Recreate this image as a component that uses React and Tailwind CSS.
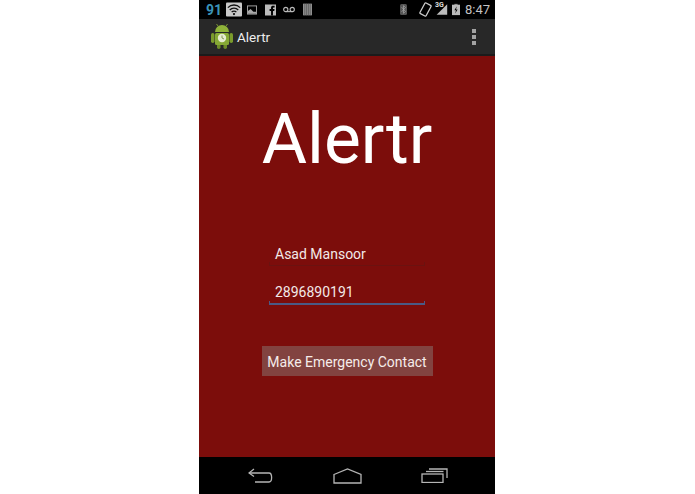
function StatusLeft() {
  return (
    <div className="flex items-center">
      <span className="text-[14px] leading-none font-bold text-[#3a93b8]">91</span>
      <svg width="16" height="15" viewBox="0 0 17 15" className="ml-[4px]">
        <rect width="17" height="15" rx="1" fill="#c9c9c9" />
        <path d="M2 5.500a9 9 0 0 1 13 0M4 8a6 6 0 0 1 9 0M6 10.300a3.400 3.400 0 0 1 5 0" stroke="#111" strokeWidth="1.400" fill="none" />
        <circle cx="8.500" cy="12.300" r="1.200" fill="#111" />
      </svg>
      <svg width="10" height="10" viewBox="0 0 11 10" className="ml-[5px]">
        <rect x="0.500" y="0.500" width="10" height="9" fill="none" stroke="#aaa" />
        <path d="M1 9V6l3-2 3 3 3 0v2z" fill="#aaa" />
      </svg>
      <svg width="11" height="12" viewBox="0 0 12 12" className="ml-[8px]">
        <rect width="12" height="12" fill="#bbb" />
        <path d="M6.600 12V7H5V5h1.600V3.600C6.600 2 7.500 1.400 8.900 1.400H10.500V3.300H9.500C8.900 3.300 8.700 3.600 8.700 4.100V5H10.400L10.100 7H8.700V12z" fill="#000" />
      </svg>
      <svg width="12" height="7" viewBox="0 0 13 7" className="ml-[7px]">
        <circle cx="3" cy="3.500" r="2.300" fill="none" stroke="#bbb" strokeWidth="1.200" />
        <circle cx="10" cy="3.500" r="2.300" fill="none" stroke="#bbb" strokeWidth="1.200" />
        <path d="M3 5.800h7" stroke="#bbb" strokeWidth="1.200" />
      </svg>
      <svg width="9" height="13" viewBox="0 0 10 13" className="ml-[8px]">
        <rect width="10" height="13" fill="#8f8f8f" />
        <path d="M2 0v13M4 0v13M6 0v13M8 0v13" stroke="#555" strokeWidth="0.800" />
      </svg>
    </div>
  )
}

function StatusRight() {
  return (
    <div className="flex items-center">
      <svg width="7" height="13" viewBox="0 0 9 14">
        <rect width="9" height="14" rx="2" fill="#555" />
        <path d="M2 4l5 5.500-2.500 2.500V2L7 4.500 2 10" stroke="#aaa" fill="none" strokeWidth="0.900" />
      </svg>
      <svg width="15" height="15" viewBox="0 0 15 15" className="ml-[11px]">
        <rect x="4" y="1.500" width="7" height="12" rx="1" transform="rotate(28 7.500 7.500)" fill="none" stroke="#ccc" strokeWidth="1.300" />
      </svg>
      <div className="relative ml-[2px] h-[15px] w-[13px]">
        <svg width="13" height="15" viewBox="0 0 16 15">
          <path d="M15 1v13H2z" fill="#bbb" />
        </svg>
        <span className="absolute top-[-1px] left-0 text-[7px] leading-[9px] font-bold text-[#ddd]">3G</span>
      </div>
      <svg width="8" height="13" viewBox="0 0 10 14" className="ml-[4px]">
        <rect y="1" width="10" height="13" fill="#bbb" />
        <rect x="3" width="4" height="1" fill="#bbb" />
        <path d="M6 3L3 8h2l-1 4 3-5H5z" fill="#000" />
      </svg>
      <span className="ml-[5px] text-[13px] leading-none text-[#c4c4c4]">8:47</span>
    </div>
  )
}

function AndroidLogo() {
  return (
    <svg width="22" height="25" viewBox="0 0 22 25">
      <rect x="0" y="9" width="3.500" height="10" rx="1.700" fill="#7a9a2c" />
      <rect x="18.500" y="9" width="3.500" height="10" rx="1.700" fill="#7a9a2c" />
      <rect x="6" y="19" width="3.500" height="6" rx="1.700" fill="#6d8c28" />
      <rect x="12.500" y="19" width="3.500" height="6" rx="1.700" fill="#6d8c28" />
      <path d="M4 8a7 7 0 0 1 14 0z" fill="#8fb339" />
      <path d="M7 2L5.500 0M15 2l1.500-2" stroke="#8fb339" strokeWidth="0.800" />
      <rect x="4" y="9" width="14" height="12" rx="1.500" fill="#86a935" />
      <circle cx="11" cy="14" r="4.200" fill="#e6ecd2" />
      <path d="M11 11.500V14l2 1" stroke="#7a8f4a" strokeWidth="0.900" fill="none" />
    </svg>
  )
}

function NavIcons() {
  return (
    <div className="flex h-[37px] items-center justify-between bg-black pr-[47px] pl-[49px]">
      <svg width="26" height="15" viewBox="0 0 26 15" fill="none" stroke="#b5b5b5" strokeWidth="1.300">
        <path d="M6 1L1 5l5 3.500" />
        <path d="M1 5h20c3.500 0 3.500 9 0 9H7" />
      </svg>
      <svg width="29" height="16" viewBox="0 0 29 16" fill="none" stroke="#b5b5b5" strokeWidth="1.300">
        <path d="M1 6.500L14.500 1 28 6.500V15H1z" />
      </svg>
      <svg width="27" height="15" viewBox="0 0 27 15" fill="none" stroke="#b5b5b5" strokeWidth="1.300">
        <rect x="1" y="6" width="21" height="8.500" />
        <path d="M5 3.500h17.500" />
        <path d="M8 1h18v9" />
      </svg>
    </div>
  )
}

function Field({ value, focused, className }) {
  const lineColor = focused ? 'bg-[#4a5a86]' : 'bg-[#6b1210]'
  return (
    <div className={`relative h-[39px] w-[156px] pl-[6px] text-[14px] leading-[20px] text-[#f3e9e8] ${className}`}>
      {value}
      <div className={`absolute right-0 bottom-0 left-0 ${focused ? 'h-[2px]' : 'h-[1px]'} ${lineColor}`} />
      <div className={`absolute bottom-0 left-0 h-[4px] w-[1px] ${lineColor}`} />
      <div className={`absolute right-0 bottom-0 h-[4px] w-[1px] ${lineColor}`} />
    </div>
  )
}

export default function App() {
  return (
    <div className="flex h-[494px] w-[695px] bg-white pl-[199px] font-['Roboto',sans-serif]">
      <div className="flex w-[296px] flex-col">
        <div className="flex h-[19px] items-center justify-between bg-black pr-[5px] pl-[7px]">
          <StatusLeft />
          <StatusRight />
        </div>
        <div className="flex h-[37px] items-center justify-between border-b-2 border-[#1b1b1b] bg-[#282828] pr-[19px] pl-[12px]">
          <div className="flex items-center gap-[4px]">
            <AndroidLogo />
            <span className="mt-[2px] text-[13.500px] leading-none text-[#eeeeee]">Alertr</span>
          </div>
          <div className="flex flex-col gap-[2px]">
            <div className="size-[4px] bg-[#a3a3a3]" />
            <div className="size-[4px] bg-[#a3a3a3]" />
            <div className="size-[4px] bg-[#a3a3a3]" />
          </div>
        </div>
        <div className="flex flex-1 flex-col items-center bg-[#7c0d0b]">
          <h1 className="mt-[39px] h-[90px] text-[69.500px] leading-[90px] font-normal text-white">Alertr</h1>
          <Field value="Asad Mansoor" className="mt-[42px] pt-[17px]" />
          <Field value="2896890191" focused className="pt-[16px]" />
          <button className="mt-[41px] flex h-[30px] w-[171px] items-center justify-center bg-[#824340] pt-[2px] text-[14px] text-[#f5ecea]">
            Make Emergency Contact
          </button>
        </div>
        <NavIcons />
      </div>
    </div>
  )
}
